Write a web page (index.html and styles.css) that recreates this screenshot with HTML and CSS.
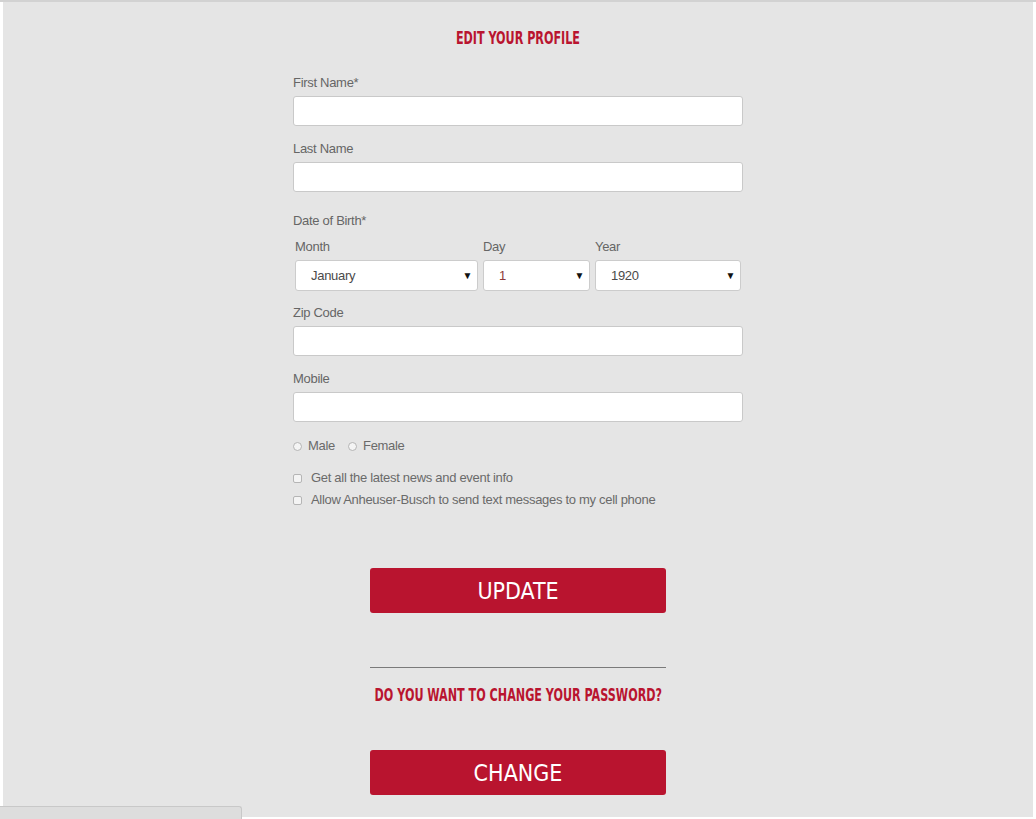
FILE: index.html
```html
<!DOCTYPE html>
<html>
<head>
<meta charset="utf-8">
<link rel="stylesheet" href="styles.css">
</head>
<body>
<div class="page">
  <h1 class="title">EDIT YOUR PROFILE</h1>
  <form class="form">
    <div class="field">
      <label class="label">First Name*</label>
      <input class="input" type="text">
    </div>
    <div class="field">
      <label class="label">Last Name</label>
      <input class="input" type="text">
    </div>
    <div class="dob">
      <div class="label dob-label">Date of Birth*</div>
      <div class="dob-row">
        <div class="dob-col month">
          <div class="sublabel">Month</div>
          <div class="select"><span class="val">January</span><span class="arrow">▼</span></div>
        </div>
        <div class="dob-col day">
          <div class="sublabel">Day</div>
          <div class="select"><span class="val red">1</span><span class="arrow">▼</span></div>
        </div>
        <div class="dob-col year">
          <div class="sublabel">Year</div>
          <div class="select"><span class="val">1920</span><span class="arrow">▼</span></div>
        </div>
      </div>
    </div>
    <div class="field">
      <label class="label">Zip Code</label>
      <input class="input" type="text">
    </div>
    <div class="field">
      <label class="label">Mobile</label>
      <input class="input" type="text">
    </div>
    <div class="radios">
      <span class="opt"><span class="radio"></span>Male</span>
      <span class="opt"><span class="radio"></span>Female</span>
    </div>
    <div class="checks">
      <div class="check"><span class="box"></span>Get all the latest news and event info</div>
      <div class="check"><span class="box"></span>Allow Anheuser-Busch to send text messages to my cell phone</div>
    </div>
    <div class="actions">
      <button type="button" class="btn">UPDATE</button>
      <hr class="rule">
      <h2 class="subtitle">DO YOU WANT TO CHANGE YOUR PASSWORD?</h2>
      <button type="button" class="btn btn-change">CHANGE</button>
    </div>
  </form>
</div>
<div class="tab"></div>
</body>
</html>
```

FILE: styles.css
```css
html, body {
  margin: 0;
  padding: 0;
  background: #ffffff;
  height: 819px;
  overflow: hidden;
}
body {
  border-top: 2px solid #d2d2d2;
  box-sizing: border-box;
  font-family: "Liberation Sans", Arial, sans-serif;
}
.page {
  margin: 0 3px;
  background: #e5e5e5;
  height: 815px;
  display: flex;
  flex-direction: column;
  align-items: center;
}
.title {
  margin: 26px 0 0;
  font-family: "DejaVu Sans Condensed", "DejaVu Sans", sans-serif;
  font-weight: bold;
  font-size: 18px;
  line-height: 20px;
  color: #b9142f;
  transform: scaleX(0.69);
  white-space: nowrap;
}
.form {
  width: 450px;
  margin-top: 27px;
  display: flex;
  flex-direction: column;
  letter-spacing: -0.3px;
}
.field {
  display: flex;
  flex-direction: column;
  margin-bottom: 15px;
}
.label {
  font-size: 13px;
  line-height: 16px;
  color: #666666;
  margin-bottom: 5px;
}
.input {
  height: 30px;
  box-sizing: border-box;
  border: 1px solid #c9c9c9;
  border-radius: 3px;
  background: #fff;
  margin: 0;
  padding: 0 8px;
}
.dob {
  margin-top: 6px;
}
.dob-label {
  margin-bottom: 10px;
}
.dob-row {
  display: flex;
  padding-left: 2px;
  gap: 5px;
}
.month { width: 183px; }
.day { width: 107px; }
.year { width: 146px; }
.sublabel {
  font-size: 13px;
  line-height: 16px;
  color: #666666;
  margin-bottom: 5px;
}
.select {
  height: 31px;
  box-sizing: border-box;
  border: 1px solid #cccccc;
  border-radius: 3px;
  background: #fff;
  display: flex;
  align-items: center;
  justify-content: space-between;
  padding: 0 5px 0 15px;
}
.val {
  font-size: 13px;
  color: #4a4a4a;
}
.val.red { color: #8c3a3a; }
.arrow {
  font-size: 10px;
  color: #111;
}
.dob + .field {
  margin-top: 14px;
}
.radios {
  display: flex;
  gap: 13px;
  margin-top: 1px;
  font-size: 13px;
  line-height: 16px;
  color: #6a6a6a;
}
.opt {
  display: flex;
  align-items: center;
}
.radio {
  width: 9px;
  height: 9px;
  border: 1px solid #b5b5b5;
  border-radius: 50%;
  background: #f4f4f4;
  box-sizing: border-box;
  margin-right: 6px;
}
.checks {
  margin-top: 16px;
  display: flex;
  flex-direction: column;
  gap: 6px;
}
.check {
  display: flex;
  align-items: center;
  font-size: 13px;
  line-height: 16px;
  color: #6a6a6a;
}
.box {
  width: 9px;
  height: 9px;
  border: 1px solid #b5b5b5;
  border-radius: 2px;
  background: #f4f4f4;
  box-sizing: border-box;
  margin-right: 9px;
}
.actions {
  display: flex;
  flex-direction: column;
  align-items: center;
  margin-top: 60px;
  letter-spacing: 0;
}
.btn {
  width: 296px;
  height: 45px;
  border: none;
  border-radius: 3px;
  background: #b9142f;
  color: #fff;
  font-family: "DejaVu Sans Condensed", "DejaVu Sans", sans-serif;
  font-size: 23px;
  padding: 0;
  margin: 0;
}
.rule {
  width: 296px;
  margin: 54px 0 0;
  border: none;
  border-top: 1px solid #7a7a7a;
  height: 0;
}
.subtitle {
  margin: 17px 0 0;
  font-family: "DejaVu Sans Condensed", "DejaVu Sans", sans-serif;
  font-weight: bold;
  font-size: 18px;
  line-height: 20px;
  color: #b9142f;
  transform: scaleX(0.69);
  white-space: nowrap;
}
.btn-change {
  margin-top: 45px;
}
.tab {
  position: fixed;
  left: 0;
  bottom: 0;
  width: 242px;
  height: 13px;
  background: #dddddd;
  border-top: 1px solid #c8c8c8;
  border-right: 1px solid #c8c8c8;
  border-top-right-radius: 3px;
  box-sizing: border-box;
}
```
